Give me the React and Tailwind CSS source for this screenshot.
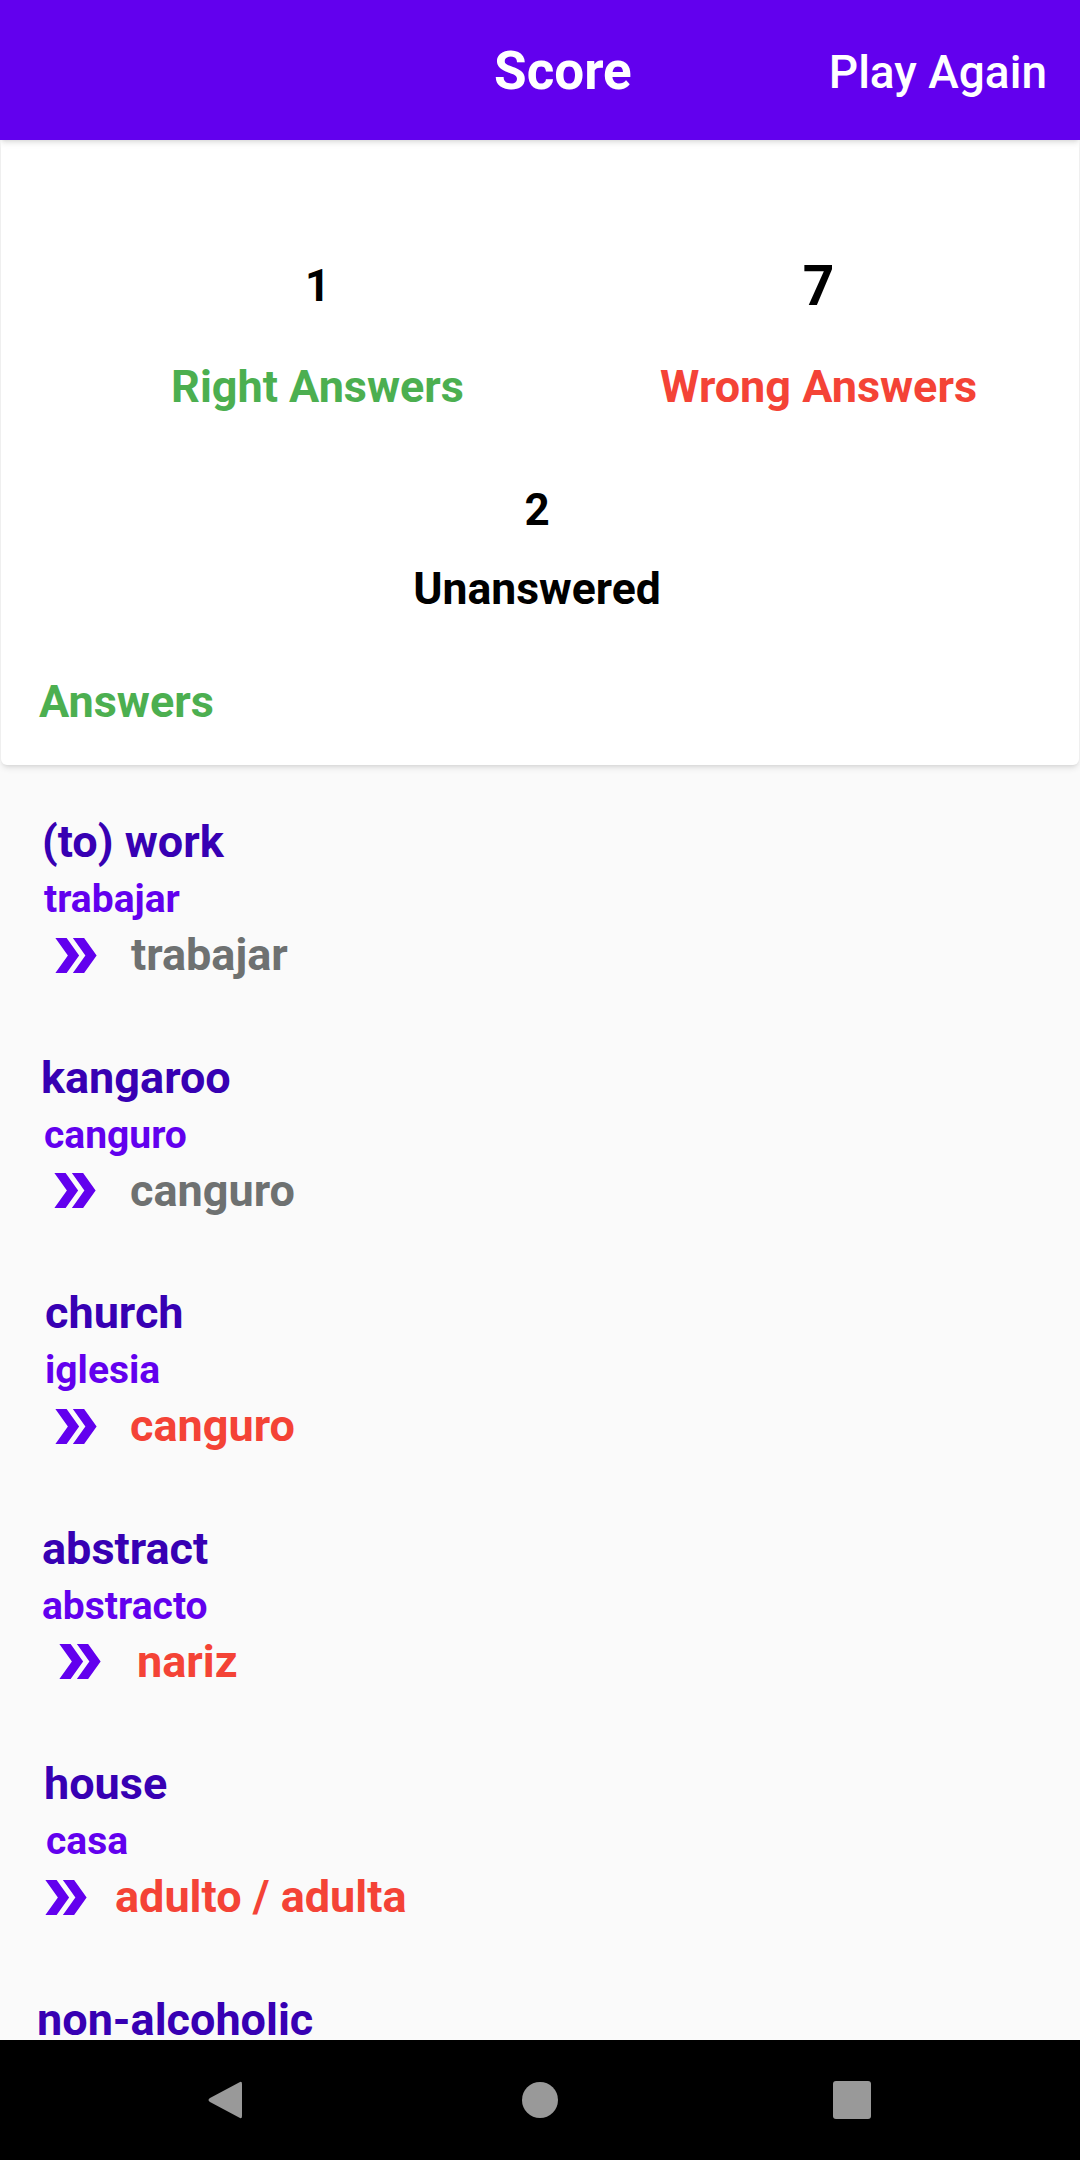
import React from 'react';

const answers = [
  {
    word: '(to) work',
    translation: 'trabajar',
    given: 'trabajar',
    status: 'skip',
    wordPad: 'pl-[42px]',
    transPad: 'pl-[44px]',
    arrowPad: 'pl-[55px]',
    gap: 'ml-[34px]',
  },
  {
    word: 'kangaroo',
    translation: 'canguro',
    given: 'canguro',
    status: 'skip',
    wordPad: 'pl-[41px]',
    transPad: 'pl-[44px]',
    arrowPad: 'pl-[54px]',
    gap: 'ml-[34px]',
  },
  {
    word: 'church',
    translation: 'iglesia',
    given: 'canguro',
    status: 'wrong',
    wordPad: 'pl-[45px]',
    transPad: 'pl-[45px]',
    arrowPad: 'pl-[55px]',
    gap: 'ml-[33px]',
  },
  {
    word: 'abstract',
    translation: 'abstracto',
    given: 'nariz',
    status: 'wrong',
    wordPad: 'pl-[42px]',
    transPad: 'pl-[42px]',
    arrowPad: 'pl-[59px]',
    gap: 'ml-[36px]',
  },
  {
    word: 'house',
    translation: 'casa',
    given: 'adulto / adulta',
    status: 'wrong',
    wordPad: 'pl-[44px]',
    transPad: 'pl-[46px]',
    arrowPad: 'pl-[45px]',
    gap: 'ml-[28px]',
  },
  {
    word: 'non-alcoholic',
    wordPad: 'pl-[37px]',
  },
];

const DoubleArrow = () => (
  <svg width="42" height="35" viewBox="4 5 16.5 14" fill="#6200EE" className="shrink-0">
    <path d="M15.5 5H11l5 7-5 7h4.5l5-7z" />
    <path d="M8.5 5H4l5 7-5 7h4.5l5-7z" />
  </svg>
);

const AnswerItem = ({ item }) => (
  <div className="pt-[34px] pb-[33.5px]">
    <p className={`${item.wordPad} text-[45px] leading-[56px] font-bold text-[#3700B3]`}>
      {item.word}
    </p>
    {item.translation && (
      <>
        <p className={`${item.transPad} text-[39px] leading-[58px] font-bold text-[#6200EE]`}>
          {item.translation}
        </p>
        <div className={`${item.arrowPad} flex items-center h-[54px]`}>
          <DoubleArrow />
          <span
            className={`${item.gap} text-[45px] leading-[54px] font-bold ${
              item.status === 'wrong' ? 'text-[#F44336]' : 'text-[#6E7171]'
            }`}
          >
            {item.given}
          </span>
        </div>
      </>
    )}
  </div>
);

const NavBar = () => (
  <div className="h-[120px] bg-black flex items-center shrink-0 pl-[207px]">
    <svg width="35" height="40" viewBox="0 0 35 40">
      <path d="M33 2 L3 18 Q0 20 3 22 L33 38 Q35 39 35 36 L35 4 Q35 1 33 2 Z" fill="#999999" />
    </svg>
    <div className="ml-[280px] w-[36px] h-[36px] rounded-full bg-[#999999]" />
    <div className="ml-[275px] w-[38px] h-[38px] rounded-[3px] bg-[#999999]" />
  </div>
);

export default function App() {
  return (
    <div
      className="w-[1080px] h-[2160px] flex flex-col bg-[#FAFAFA] overflow-hidden"
      style={{ fontFamily: 'Roboto, "Noto Sans", sans-serif' }}
    >
      <header className="relative z-20 h-[140px] shrink-0 bg-[#6200EE] flex items-center shadow-md pl-[494px] pr-[33px]">
        <h1 className="text-[53px] font-bold text-white pt-[3px]">Score</h1>
        <button className="ml-auto text-[46px] font-medium text-white pt-[4px]">Play Again</button>
      </header>

      <section className="relative z-10 shrink-0 bg-white mx-[1px] rounded-b-[6px] shadow-md pb-[35px]">
        <div className="grid grid-cols-2 pl-[66px] pr-[10px] pt-[116px]">
          <div className="flex flex-col items-center">
            <span className="text-[44px] leading-[60px] font-bold text-black">1</span>
            <span className="mt-[43px] text-[45px] leading-[56px] font-bold text-[#4CAF50]">Right Answers</span>
          </div>
          <div className="flex flex-col items-center">
            <span className="text-[55px] leading-[60px] font-bold text-black">7</span>
            <span className="mt-[43px] text-[45px] leading-[56px] font-bold text-[#F44336]">Wrong Answers</span>
          </div>
        </div>
        <div className="flex flex-col items-center pr-[6px] mt-[65px]">
          <span className="text-[44px] leading-[60px] font-bold text-black">2</span>
          <span className="mt-[21px] text-[44.5px] leading-[56px] font-bold text-black">Unanswered</span>
        </div>
        <p className="pl-[38px] mt-[57px] text-[45px] leading-[56px] font-bold text-[#4CAF50]">Answers</p>
      </section>

      <main className="flex-1 overflow-hidden pt-[15px]">
        {answers.map((item) => (
          <AnswerItem key={item.word} item={item} />
        ))}
      </main>

      <NavBar />
    </div>
  );
}
